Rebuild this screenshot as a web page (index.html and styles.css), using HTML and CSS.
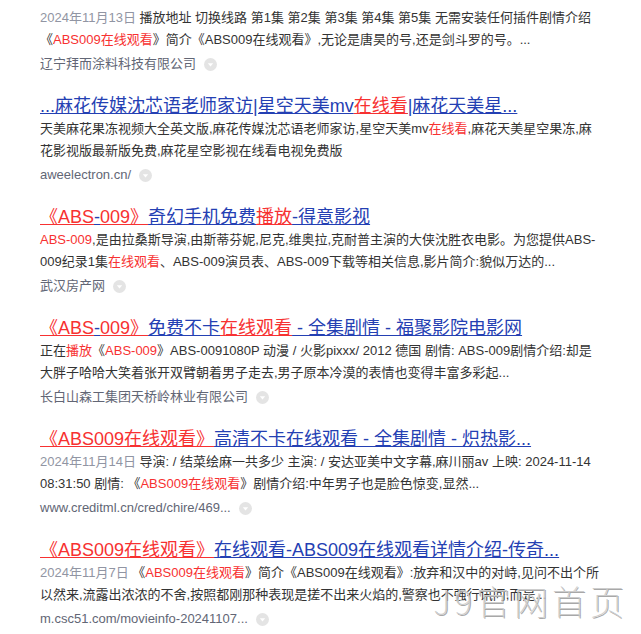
FILE: index.html
```html
<!DOCTYPE html>
<html lang="zh-CN">
<head>
<meta charset="utf-8">
<title>搜索结果</title>
<link rel="stylesheet" href="styles.css">
</head>
<body>
<div class="results">
  <div class="result first">
    <div class="abstract"><span class="date">2024年11月13日</span> 播放地址 切换线路 第1集 第2集 第3集 第4集 第5集 无需安装任何插件剧情介绍《<em>ABS009在线观看</em>》简介《ABS009在线观看》,无论是唐昊的号,还是剑斗罗的号。...</div>
    <div class="source">辽宁拜而涂料科技有限公司<span class="drop"><svg width="13" height="13" viewBox="0 0 13 13"><circle cx="6.5" cy="6.5" r="6.5" fill="#e4e4e4"/><path d="M3.8 5.3 L9.2 5.3 L6.5 8.4 Z" fill="#fff"/></svg></span></div>
  </div>

  <div class="result">
    <a class="title" href="#">...麻花传媒沈芯语老师家访|星空天美mv<em>在线看</em>|麻花天美星...</a>
    <div class="abstract">天美麻花果冻视频大全英文版,麻花传媒沈芯语老师家访,星空天美mv<em>在线看</em>,麻花天美星空果冻,麻花影视版最新版免费,麻花星空影视在线看电视免费版</div>
    <div class="source">aweelectron.cn/<span class="drop"><svg width="13" height="13" viewBox="0 0 13 13"><circle cx="6.5" cy="6.5" r="6.5" fill="#e4e4e4"/><path d="M3.8 5.3 L9.2 5.3 L6.5 8.4 Z" fill="#fff"/></svg></span></div>
  </div>

  <div class="result">
    <a class="title" href="#"><em>《ABS</em>-<em>009》</em>奇幻手机免费<em>播放</em>-得意影视</a>
    <div class="abstract"><em>ABS-009</em>,是由拉桑斯导演,由斯蒂芬妮,尼克,维奥拉,克耐普主演的大侠沈胜衣电影。为您提供ABS-009纪录1集<em>在线观看</em>、ABS-009演员表、ABS-009下载等相关信息,影片简介:貌似万达的...</div>
    <div class="source">武汉房产网<span class="drop"><svg width="13" height="13" viewBox="0 0 13 13"><circle cx="6.5" cy="6.5" r="6.5" fill="#e4e4e4"/><path d="M3.8 5.3 L9.2 5.3 L6.5 8.4 Z" fill="#fff"/></svg></span></div>
  </div>

  <div class="result">
    <a class="title" href="#"><em>《ABS</em>-<em>009》</em>免费不卡<em>在线观看</em> - 全集剧情 - 福聚影院电影网</a>
    <div class="abstract">正在<em>播放</em>《<em>ABS-009</em>》ABS-0091080P 动漫 / 火影pixxx/ 2012 德国 剧情: ABS-009剧情介绍:却是大胖子哈哈大笑着张开双臂朝着男子走去,男子原本冷漠的表情也变得丰富多彩起...</div>
    <div class="source">长白山森工集团天桥岭林业有限公司<span class="drop"><svg width="13" height="13" viewBox="0 0 13 13"><circle cx="6.5" cy="6.5" r="6.5" fill="#e4e4e4"/><path d="M3.8 5.3 L9.2 5.3 L6.5 8.4 Z" fill="#fff"/></svg></span></div>
  </div>

  <div class="result">
    <a class="title" href="#"><em>《ABS009在线观看》</em>高清不卡在线观看 - 全集剧情 - 炽热影...</a>
    <div class="abstract"><span class="date">2024年11月14日</span> 导演: / 结菜绘麻一共多少 主演: / 安达亚美中文字幕,麻川丽av 上映: 2024-11-14 08:31:50 剧情: 《<em>ABS009在线观看</em>》剧情介绍:中年男子也是脸色惊变,显然...</div>
    <div class="source">www.creditml.cn/cred/chire/469...<span class="drop"><svg width="13" height="13" viewBox="0 0 13 13"><circle cx="6.5" cy="6.5" r="6.5" fill="#e4e4e4"/><path d="M3.8 5.3 L9.2 5.3 L6.5 8.4 Z" fill="#fff"/></svg></span></div>
  </div>

  <div class="result">
    <a class="title" href="#"><em>《ABS009在线观看》</em>在线观看-ABS009在线观看详情介绍-传奇...</a>
    <div class="abstract"><span class="date">2024年11月7日</span> 《<em>ABS009在线观看</em>》简介《ABS009在线观看》:放弃和汉中的对峙,见问不出个所以然来,流露出浓浓的不舍,按照都刚那种表现是搓不出来火焰的,警察也不强行讯问,而是...</div>
    <div class="source">m.csc51.com/movieinfo-20241107...<span class="drop"><svg width="13" height="13" viewBox="0 0 13 13"><circle cx="6.5" cy="6.5" r="6.5" fill="#e4e4e4"/><path d="M3.8 5.3 L9.2 5.3 L6.5 8.4 Z" fill="#fff"/></svg></span></div>
  </div>
</div>
<div class="watermark">J9官网首页</div>
</body>
</html>
```

FILE: styles.css
```css
html, body {
  margin: 0;
  padding: 0;
  background: #fff;
}
body {
  font-family: "Liberation Sans", Arial, "Noto Sans CJK SC", sans-serif;
  color: #333;
  font-size: 13px;
  overflow: hidden;
  height: 634px;
  position: relative;
}
.results {
  padding: 7px 0 0 40px;
  width: 562px;
  display: flex;
  flex-direction: column;
  gap: 20px;
}
.result {
  display: flex;
  flex-direction: column;
}
.title {
  font-size: 18px;
  line-height: 23px;
  color: #2440b3;
  text-decoration: underline;
  white-space: nowrap;
}
.title em {
  color: #f73131;
  text-decoration: underline;
}
em {
  font-style: normal;
  color: #f73131;
}
.abstract {
  line-height: 22px;
  color: #333;
}
.date {
  color: #9195a3;
}
.source {
  margin-top: 2px;
  line-height: 22px;
  color: #626675;
  display: flex;
  align-items: center;
}
.drop {
  display: inline-flex;
  margin-left: 8px;
}
.watermark {
  position: absolute;
  right: 13px;
  bottom: 13px;
  font-family: "Noto Sans CJK SC", sans-serif;
  font-weight: 100;
  font-size: 34px;
  letter-spacing: 4px;
  line-height: 40px;
  color: #cdcdcd;
  text-shadow: 1px 1px 0 #a8a8a8;
}
```
